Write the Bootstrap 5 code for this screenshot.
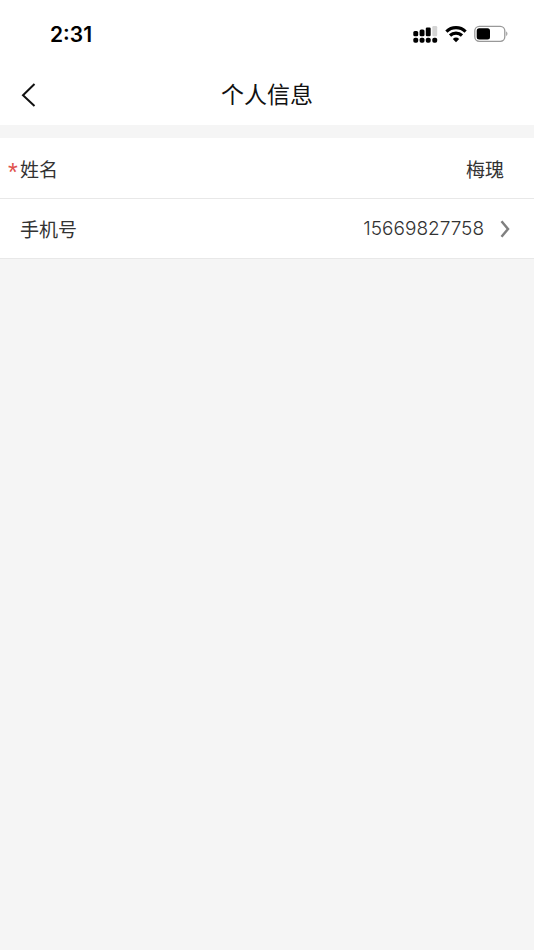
<!DOCTYPE html>
<html lang="zh-CN">
<head>
<meta charset="utf-8">
<meta name="viewport" content="width=device-width, initial-scale=1">
<title>个人信息</title>
<link href="https://cdn.jsdelivr.net/npm/bootstrap@5.3.0/dist/css/bootstrap.min.css" rel="stylesheet">
<style>
body { background: #f5f5f5; color: #333; font-family: "Liberation Sans", "Noto Sans CJK SC", sans-serif; }
.status-bar { height: 65px; padding: 3px 25px 0 50px; color: #000; }
.clock { padding-top: 2px; font: 600 21px/30px Inter, sans-serif; }
.status-icons { gap: 7px; }
.title-bar { display: grid; grid-template-columns: 56px 1fr 56px; height: 60px; }
.title-bar h1 { font-size: 23px; line-height: 32px; color: #111; }
.back-btn { height: 60px; }
.info-list { margin-top: 13px; font-size: 19px; line-height: 28px; }
.info-row { min-height: 61px; padding: 6px 30px 0 20px; border-bottom: 1px solid #e8e8e8; }
.info-row.has-arrow { min-height: 60px; padding: 5px 24px 0 20px; }
.required-mark { left: 8px; color: #e0524d; font-size: 25px; top: 20px; }
.phone-line { padding-bottom: 4px; }
.phone { font: 300 19px/28px Inter, sans-serif; }
</style>
</head>
<body>
<header class="bg-white">
  <div class="status-bar d-flex align-items-center justify-content-between">
    <span class="clock">2:31</span>
    <div class="status-icons d-flex align-items-center">
      <svg width="25" height="18" viewBox="0 0 25 18" aria-hidden="true">
        <rect x="0.3" y="6" width="4.9" height="5.2" rx="1.5"/>
        <rect x="6.6" y="4.5" width="4.9" height="6.7" rx="1.5"/>
        <rect x="12.8" y="2.5" width="4.9" height="8.7" rx="1.2"/>
        <rect x="19.3" y="1" width="4.9" height="10.2" rx="1.2" fill="#d4d4d4"/>
        <rect x="0.3" y="12.8" width="4.9" height="4.9" rx="1.8"/>
        <rect x="6.6" y="12.8" width="4.9" height="4.9" rx="1.8"/>
        <rect x="12.8" y="12.8" width="4.9" height="4.9" rx="1.8"/>
        <rect x="19.3" y="12.8" width="4.9" height="4.9" rx="1.8"/>
      </svg>
      <svg width="22" height="18" viewBox="0 0 22 18" aria-hidden="true">
        <path d="M1.4 6.6a13.8 13.8 0 0 1 19.2 0M5 10.5a8.7 8.7 0 0 1 12 0" fill="none" stroke="#000" stroke-width="3.2"/>
        <path d="M11 17.2 7.8 13.9a4.7 4.7 0 0 1 6.4 0Z"/>
      </svg>
      <svg width="35" height="18" viewBox="0 0 35 18" aria-hidden="true">
        <rect x="0.8" y="1.3" width="30" height="15" rx="4.5" fill="none" stroke="#999" stroke-width="1.3"/>
        <rect x="2.7" y="3.2" width="13.3" height="11.2" rx="2.5"/>
        <path d="M32.3 6.3q2.2 2.5 0 5Z" fill="#888"/>
      </svg>
    </div>
  </div>
  <div class="title-bar align-items-center">
    <button type="button" class="back-btn btn border-0 rounded-0 p-0 ps-3 d-flex align-items-center" aria-label="返回">
      <svg width="24" height="26" viewBox="0 0 24 26" aria-hidden="true"><path d="M18.5 2 7 13.2 18.5 24" fill="none" stroke="#111" stroke-width="2"/></svg>
    </button>
    <h1 class="m-0 fw-normal text-center">个人信息</h1>
  </div>
</header>
<main class="info-list">
  <div class="info-row bg-white d-flex align-items-center justify-content-between position-relative">
    <span class="required-mark position-absolute">*</span>
    <span>姓名</span>
    <span>梅瑰</span>
  </div>
  <a href="#" class="info-row has-arrow bg-white d-flex align-items-center justify-content-between text-reset text-decoration-none">
    <span>手机号</span>
    <span class="phone-line d-flex align-items-center gap-3">
      <span class="phone">15669827758</span>
      <svg width="10" height="18" viewBox="0 0 10 18" aria-hidden="true"><path d="m1.5 1.2 6.5 7.8-6.5 7.8" fill="none" stroke="#808080" stroke-width="2.5"/></svg>
    </span>
  </a>
</main>
<script src="https://cdn.jsdelivr.net/npm/bootstrap@5.3.0/dist/js/bootstrap.bundle.min.js"></script>
</body>
</html>
